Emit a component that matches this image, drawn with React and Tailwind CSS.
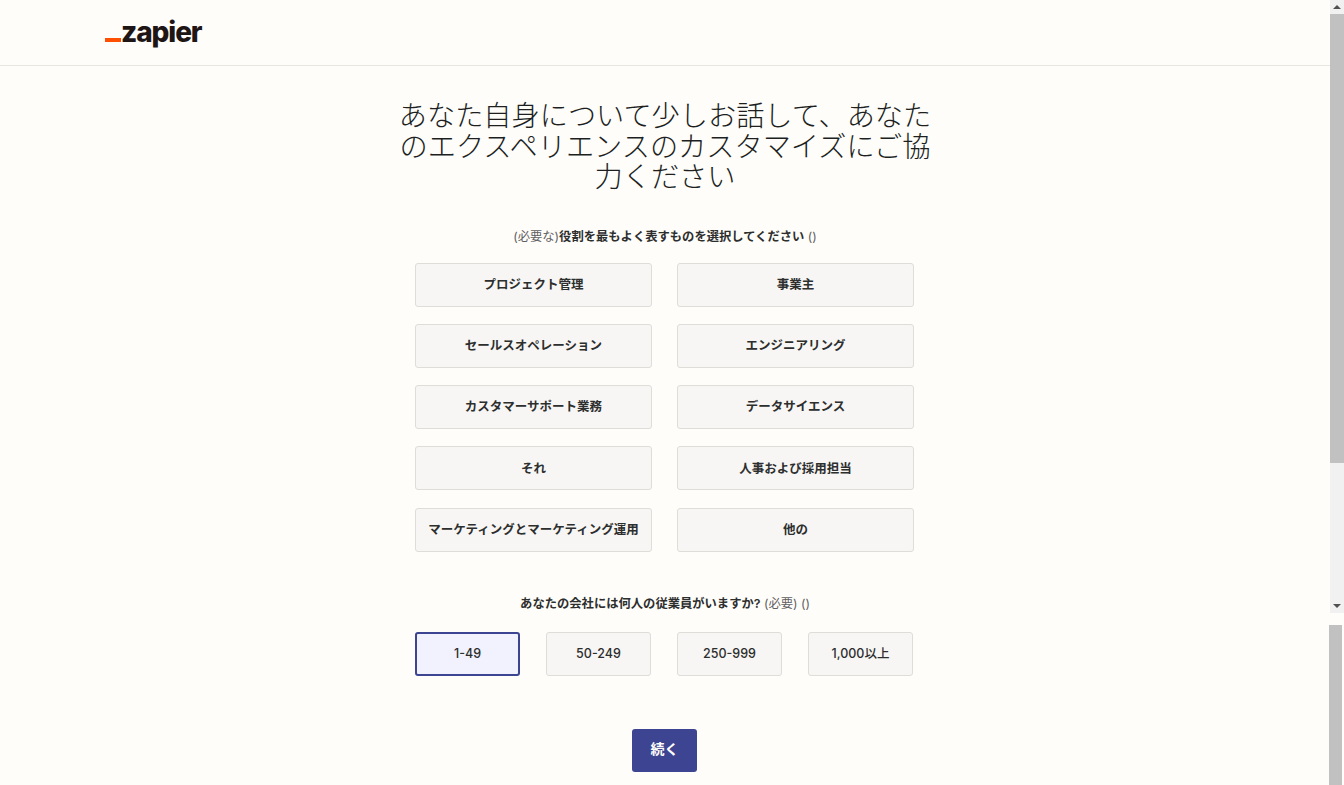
import React from "react";

const cjk = { fontFamily: '"Inter", "Noto Sans CJK JP", sans-serif' };

const roles = [
  ["プロジェクト管理", "事業主"],
  ["セールスオペレーション", "エンジニアリング"],
  ["カスタマーサポート業務", "データサイエンス"],
  ["それ", "人事および採用担当"],
  ["マーケティングとマーケティング運用", "他の"],
];

const sizes = ["1-49", "50-249", "250-999", "1,000以上"];

function Choice({ label, selected, className }) {
  return (
    <button
      className={`flex h-[44px] items-center justify-center rounded-[3px] border pt-[1px] text-[12.5px] leading-none whitespace-nowrap text-[#2d2e2e] ${
        selected
          ? "border-2 border-[#3d4592] bg-[#f1f2fd]"
          : "border-[#dfddd8] bg-[#f7f6f4]"
      } ${className}`}
    >
      {label}
    </button>
  );
}

function Scrollbar({ children, className }) {
  return <div className={`flex w-[14px] shrink-0 flex-col items-center bg-[#f1f1f1] ${className}`}>{children}</div>;
}

export default function App() {
  return (
    <div className="flex h-screen flex-col overflow-hidden bg-[#fffdf9]" style={cjk}>
      {/* Upper scroll area */}
      <div className="flex h-[613px] shrink-0 bg-[#fffdf9]">
        <div className="min-w-0 flex-1">
          <header className="flex h-[66px] items-center border-b border-[#e8e6e1] pb-[2px] pl-[105px]">
            <div className="flex items-end">
              <span className="mb-[4px] h-[4px] w-[16px] bg-[#ff4f00]" />
              <span
                className="text-[28px] leading-[28px] font-extrabold tracking-[-1.1px] text-[#201515]"
                style={{ fontFamily: '"Inter", sans-serif' }}
              >
                zapier
              </span>
            </div>
          </header>

          <h1 className="mx-auto mt-[35px] w-[540px] text-center text-[28.2px] leading-[30.5px] font-light text-[#201f1f]">
            あなた自身について少しお話して、あなたのエクスペリエンスのカスタマイズにご協力ください
          </h1>

          <p className="mt-[34px] text-center text-[12.3px] leading-[20px] text-[#5f6062]">
            (必要な)<span className="font-semibold text-[#2d2e2e]">役割を最もよく表すものを選択してください</span> ()
          </p>

          <div className="mt-[16px] flex justify-center pr-[1px]">
            <div className="grid w-[499px] grid-cols-2 gap-x-[25px] gap-y-[17.25px]">
              {roles.flat().map((role) => (
                <Choice key={role} label={role} className="w-[237px] font-bold" />
              ))}
            </div>
          </div>

          <p className="mt-[42px] text-center text-[12.3px] leading-[20px] text-[#5f6062]">
            <span className="font-semibold text-[#2d2e2e]">あなたの会社には何人の従業員がいますか?</span> (必要) ()
          </p>
        </div>

        <Scrollbar className="justify-between py-[5px]">
          <div className="h-0 w-0 border-x-[4px] border-b-[4px] border-x-transparent border-b-[#505050]" />
          <div className="mt-[5px] mb-auto h-[449px] w-full bg-[#c1c1c1]" />
          <div className="h-0 w-0 border-x-[4px] border-t-[4px] border-x-transparent border-t-[#505050]" />
        </Scrollbar>
      </div>

      {/* Lower scroll area */}
      <div className="flex min-h-0 flex-1 pt-[12px]">
        <div className="min-w-0 flex-1">
          <div className="mt-[7px] flex justify-center gap-[26px] pr-[2px]">
            {sizes.map((size, i) => (
              <Choice key={size} label={size} selected={i === 0} className="w-[105px] font-medium" />
            ))}
          </div>
          <div className="mt-[53px] flex justify-center pr-[1px]">
            <button className="h-[43px] w-[65px] rounded-[3px] bg-[#3d4592] pb-[4px] text-[14px] font-bold text-[#fffdf9]">
              続く
            </button>
          </div>
        </div>
        <div className="mr-[2px] ml-[-1px] w-[13px] shrink-0 bg-[#c1c1c1]" />
      </div>
    </div>
  );
}
